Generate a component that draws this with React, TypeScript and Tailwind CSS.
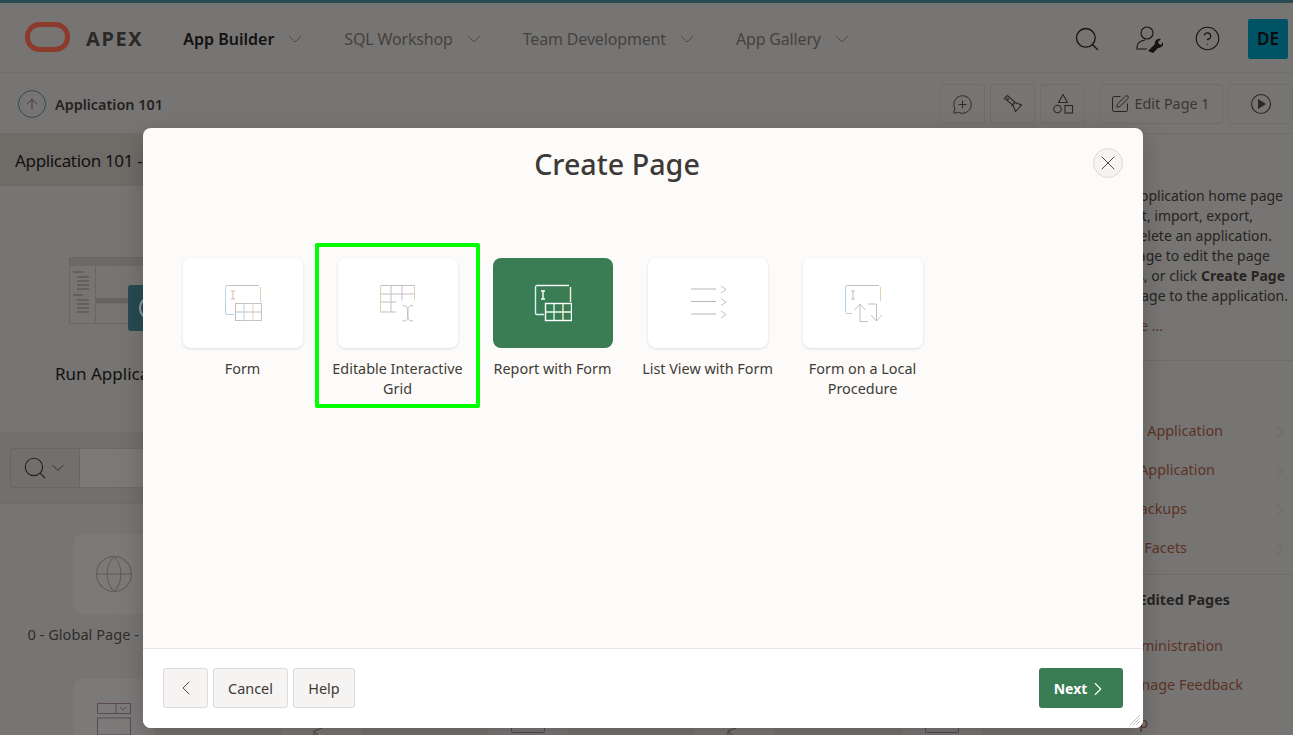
import { ChevronDown, ChevronLeft, ChevronRight, X, Search, CircleHelp, ArrowUp, MessageCirclePlus, SquarePen, Globe } from "lucide-react";

const font = "font-['Noto_Sans',sans-serif]";

function TileIconForm({ active }: { active?: boolean }) {
  const left = active ? "#d4f5f5" : "#b9d3e6";
  const right = active ? "#f5efd2" : "#e3cfb6";
  return (
    <svg width="38" height="38" viewBox="0 0 38 38" fill="none" stroke="currentColor" strokeWidth={active ? 1.4 : 1}>
      {/* form outline */}
      <path d="M3 1.500h32" />
      <path d="M36.500 3v15" stroke={right} />
      <path d="M3 1.500A1.500 1.500 0 0 0 1.500 3v26A1.500 1.500 0 0 0 3 30.500h7" stroke={left} />
      <path d="M7 7h4M9 7v8M7 15h4" />
      {/* table */}
      <rect x="11.500" y="19.500" width="26" height="17" />
      <path d="M11.500 28h26" />
      <path d="M20 19.500v17" stroke={left} />
      <path d="M29 19.500v17" stroke={right} />
    </svg>
  );
}

function TileIconGrid() {
  return (
    <svg width="38" height="38" viewBox="0 0 38 38" fill="none" stroke="currentColor" strokeWidth="1">
      <path d="M1.500 1.500h34M1.500 10h34M1.500 18h16M1.500 28h16" />
      <path d="M1.500 1.500v26.500" stroke="#e3cfb6" />
      <path d="M12 1.500v26.500" stroke="#c9b8d8" />
      <path d="M23 1.500v15" stroke="#c9b8d8" />
      <path d="M35.500 1.500v15" stroke="#e3cfb6" />
      <path d="M23.500 21.500c3 0 5 1 5 4v8c0 3-2 3.500-5 3.500M34 21.500c-3 0-5 1-5 4v8c0 3 2 3.500 5 3.500" />
    </svg>
  );
}

function TileIconList() {
  return (
    <svg width="38" height="38" viewBox="0 0 38 38" fill="none" stroke="#b8b6b4" strokeWidth="1">
      <path d="M2 5h25M2 17.500h25M2 30h25" />
      <path d="M32 2l5 3.500-5 3.500M32 14.500l5 3.500-5 3.500M32 27l5 3.500-5 3.500" stroke="#c3bfce" />
    </svg>
  );
}

function TileIconProcedure() {
  return (
    <svg width="38" height="38" viewBox="0 0 38 38" fill="none" stroke="currentColor" strokeWidth="1">
      <path d="M3 1.500h32" />
      <path d="M36.500 3v14" stroke="#e3cfb6" />
      <path d="M3 1.500A1.500 1.500 0 0 0 1.500 3v25A1.500 1.500 0 0 0 3 29.500h5" stroke="#b9d3e6" />
      <path d="M7 7h4M9 7v8M7 15h4" />
      <path d="M16 37.500V20M10.500 26l5.500-6 5.500 6" />
      <path d="M16 37.500h8M24 20h8.500v17M27 31l5.500 6 5.500-6" />
    </svg>
  );
}

function Tile({ label, icon, active }: { label: string; icon: React.ReactNode; active?: boolean }) {
  return (
    <div className="relative flex w-[155px] flex-col items-center">
      <div
        className={
          active
            ? "flex h-[90px] w-[120px] items-center justify-center rounded-lg bg-[#3a7d54] text-white"
            : "flex h-[90px] w-[120px] items-center justify-center rounded-lg bg-white text-[#c4c1be] shadow-[0_1px_3px_rgba(0,0,0,0.12)]"
        }
      >
        {icon}
      </div>
      <p className="mt-[11px] w-[146px] text-center text-[14.4px] leading-5 text-[#3f3b38]">{label}</p>
    </div>
  );
}

function HeaderLink({ label, bold }: { label: string; bold?: boolean }) {
  return (
    <div className={bold ? "flex items-center gap-[9px] font-semibold text-[#111]" : "flex items-center gap-[9px] tracking-[-0.01em] text-[#444240]"}>
      <span>{label}</span>
      <ChevronDown size={24} strokeWidth={0.7} className="text-[#3c3a38]" />
    </div>
  );
}

function ToolButton({ children, className }: { children: React.ReactNode; className?: string }) {
  return (
    <div className={"flex h-10 items-center justify-center rounded-[3px] border border-[#6f6d6a] " + className}>
      {children}
    </div>
  );
}

function SideLink({ label, className }: { label: string; className: string }) {
  return (
    <div className="flex h-[39px] items-center justify-end pr-[2px] text-[14.4px] text-[#5c3226]">
      <span className={className}>{label}</span>
      <ChevronRight size={22} strokeWidth={0.9} className="text-[#666462]" />
    </div>
  );
}

export default function App() {
  return (
    <div className={"relative flex h-screen w-full flex-col overflow-hidden bg-[#777573] " + font}>
      <div className="h-[3px] shrink-0 bg-[#284a52]" />

      {/* top header */}
      <header className="flex h-[70px] shrink-0 items-center border-b border-[#716f6d] pl-[25px] pr-[5px] pt-[2px] text-[16px]">
        <svg width="46" height="30" viewBox="0 0 46 30" fill="none" className="-mt-[3px]">
          <rect x="2.500" y="2.500" width="40" height="25" rx="12" stroke="#8c3a2c" strokeWidth="5" />
        </svg>
        <span className="ml-[15px] text-[20px] font-bold tracking-[1.6px] text-[#2b2927]">APEX</span>
        <nav className="ml-[40px] flex items-center gap-[37px]">
          <HeaderLink label="App Builder" bold />
          <HeaderLink label="SQL Workshop" />
          <HeaderLink label="Team Development" />
          <HeaderLink label="App Gallery" />
        </nav>
        <div className="ml-auto flex items-center text-[#151413]">
          <Search size={28} strokeWidth={1.100} />
          <svg width="28" height="28" viewBox="0 0 28 28" fill="none" stroke="currentColor" strokeWidth="1.100" className="ml-[34px]">
            <circle cx="12" cy="8" r="6" />
            <path d="M10 15c-5 1-8 3-8 7v2h10" />
            <path d="M13 26l7-7c-1-3 2-6 6-5l-3 3 1 2 2 1 2-3c1 4-2 6-5 6l-5 5z" fill="currentColor" stroke="none" />
          </svg>
          <CircleHelp size={27} strokeWidth={1} className="ml-[31px]" />
          <div className="ml-[27px] flex h-10 w-10 items-center justify-center rounded-[2px] bg-[#005365] text-[17px] font-semibold text-[#0c0c0c]">
            DE
          </div>
        </div>
      </header>

      {/* application toolbar */}
      <div className="flex h-[61px] shrink-0 items-center border-b border-[#6f6d6b] pl-[18px] pt-[2px]">
        <div className="flex h-7 w-7 items-center justify-center rounded-full border border-[#2a4d57] text-[#222]">
          <ArrowUp size={16} strokeWidth={1} />
        </div>
        <span className="ml-[9px] mt-px text-[14.4px] font-semibold text-[#24221f]">Application 101</span>
        <div className="ml-auto flex items-center">
          <ToolButton className="w-[45px] text-[#2a2826]">
            <MessageCirclePlus size={21} strokeWidth={1.100} />
          </ToolButton>
          <ToolButton className="ml-[5px] w-[45px] text-[#2a2826]">
            <svg width="20" height="20" viewBox="0 0 20 20" fill="none" stroke="currentColor" strokeWidth="1.100">
              <path d="M1.500 4.500l3-3 7.500 7 6.500 2.500-6 6.500-2.500-6.500zM12 8.500l-3.500 3.500" />
              <circle cx="5" cy="5" r="0.500" />
            </svg>
          </ToolButton>
          <ToolButton className="ml-[5px] w-[45px] text-[#2a2826]">
            <svg width="22" height="22" viewBox="0 0 22 22" fill="none" stroke="currentColor" strokeWidth="1.100">
              <path d="M11 1.500l4.500 8h-9z" />
              <circle cx="5.500" cy="16" r="3.700" />
              <rect x="13" y="12.500" width="7.500" height="7.500" />
            </svg>
          </ToolButton>
          <ToolButton className="ml-[15px] w-[123px] gap-[4px] pr-[3px] text-[14.4px] text-[#3d3532]">
            <SquarePen size={20} strokeWidth={1.200} className="text-[#262422]" />
            Edit Page 1
          </ToolButton>
          <ToolButton className="ml-[5px] w-[65px] text-[#2a2826]">
            <svg width="22" height="22" viewBox="0 0 22 22" fill="none" stroke="currentColor" strokeWidth="1.100">
              <circle cx="11" cy="11" r="9.500" />
              <path d="M8 6l8 5-8 5z" fill="currentColor" stroke="none" />
            </svg>
          </ToolButton>
        </div>
      </div>

      <div className="flex min-h-0 flex-1">
        {/* page finder */}
        <main className="min-w-0 flex-1">
          <div className="flex h-[52px] items-center border-b border-[#6c6a67] bg-[#6f6c68] pl-[15px] pt-[2px] text-[17px] tracking-[-0.02em] text-[#111]">
            Application 101 - Sample
          </div>
          <div className="flex h-[247px] flex-col items-start border-b border-[#6f6d6a] pl-[55px]">
            <svg width="90" height="67" viewBox="0 0 90 67" fill="none" className="ml-[14px] mt-[71px]">
              <rect x="0.500" y="0.500" width="89" height="66" stroke="#696765" />
              <rect x="1" y="1" width="88" height="8" fill="#6c6a68" />
              <path d="M26.500 9v57M26.500 46h62" stroke="#696765" />
              <path d="M4 15h10M8 20h12M8 24h12M8 28h12M8 32h12M4 38h10M8 43h12M8 47h12M8 51h12M8 55h12" stroke="#5c5a58" strokeWidth="1.500" />
              <rect x="27" y="41" width="62" height="5" fill="#656361" />
            </svg>
            <div className="absolute left-[128px] top-[285px] flex h-[46px] w-[30px] items-center rounded-[3px] bg-[#284a52] pl-[11px]">
              <div className="h-6 w-6 shrink-0 rounded-full border-2 border-[#8a9a9e]" />
            </div>
            <p className="mt-[37px] whitespace-nowrap text-[17px] text-[#111]">Run Application</p>
          </div>
          <div className="flex h-[71px] items-center border-b border-[#6e6c69] bg-[#72706d] pl-[10px]">
            <div className="flex h-10 w-[70px] items-center justify-center rounded-l-[3px] border border-[#686663] text-[#222]">
              <Search size={26} strokeWidth={1} />
              <ChevronDown size={20} strokeWidth={1} />
            </div>
            <div className="h-10 w-[300px] border-y border-[#6c6a67] bg-[#7b7977]" />
          </div>
          <div className="grid grid-cols-[repeat(5,207px)] justify-start gap-y-[35px] pl-[10px] pt-[30px] text-center text-[14.6px] text-[#2f2d2b]">
            <div className="flex flex-col items-center">
              <div className="flex h-20 w-20 items-center justify-center rounded-lg bg-[#7c7a78] text-[#5e5c5a]">
                <Globe size={42} strokeWidth={0.6} />
              </div>
              <p className="mt-[10px] whitespace-nowrap leading-5">0 - Global Page - Desktop</p>
            </div>
            <div className="col-span-4" />
            <div className="mx-auto flex h-20 w-20 justify-center rounded-lg bg-[#7c7a78] pt-[23px]">
              <svg width="36" height="34" viewBox="0 0 36 34" fill="none" stroke="#5a4a55">
                <rect x="1.500" y="1.500" width="33" height="10" />
                <path d="M20 1.500v10M24 5l3 3 3-3" />
                <rect x="1.500" y="16" width="33" height="17" />
              </svg>
            </div>
            <div className="mx-auto flex h-20 w-20 justify-center rounded-lg bg-[#7c7a78] pt-[44px]">
              <svg width="24" height="20" viewBox="0 0 24 20" fill="none" stroke="#4a4340">
                <path d="M5 19V8l8-3M5 8l5 5" />
              </svg>
            </div>
            <div className="mx-auto flex h-20 w-20 justify-center rounded-lg bg-[#7c7a78] pt-[23px]">
              <svg width="36" height="32" viewBox="0 0 36 32" fill="none" stroke="#5a4a55">
                <rect x="1.500" y="1.500" width="33" height="29" rx="1" />
              </svg>
            </div>
            <div className="mx-auto flex h-20 w-20 justify-center rounded-lg bg-[#7c7a78] pt-[44px]">
              <svg width="24" height="20" viewBox="0 0 24 20" fill="none" stroke="#4a4340">
                <path d="M5 19V8l8-3M5 8l5 5" />
              </svg>
            </div>
            <div className="mx-auto flex h-20 w-20 justify-center rounded-lg bg-[#7c7a78] pt-[23px]">
              <svg width="36" height="32" viewBox="0 0 36 32" fill="none" stroke="#5a4a55">
                <rect x="1.500" y="1.500" width="33" height="29" rx="1" />
              </svg>
            </div>
          </div>
        </main>

        {/* right column, mostly behind the dialog */}
        <aside className="w-[293px] shrink-0 whitespace-nowrap text-sm text-[#262422]">
          <div className="h-[227px] border-b border-[#6e6c6a] pt-[52px] text-right leading-5">
            <p className="pr-[10px]">This is the application home page</p>
            <p className="pr-[40px]">Click Run to run it, import, export,</p>
            <p className="pr-[21px]">copy or delete an application.</p>
            <p className="pr-[23px]">Click a page to edit the page</p>
            <p className="pr-[8px]">properties, or click <b className="font-bold">Create Page</b></p>
            <p className="pr-[5px]">to add a page to the application.</p>
            <p className="mt-[10px] pr-[130px] text-[#5c3226]">Learn more ...</p>
          </div>
          <div className="h-[214px] border-b border-[#6e6c6a] pt-[51px]">
            <SideLink label="Delete this Application" className="mr-[46px]" />
            <SideLink label="Copy this Application" className="mr-[54px]" />
            <SideLink label="Application Backups" className="mr-[82px]" />
            <SideLink label="Manage Facets" className="mr-[82px]" />
          </div>
          <div className="pt-[15px] text-right">
            <p className="pr-[63px] text-[14.4px] font-bold">Recently Edited Pages</p>
            <div className="mt-[15px] text-[14.4px] leading-[39px] text-[#5c3226]">
              <p className="pr-[70px]">1 - Administration</p>
              <p className="pr-[50px]">2 - Manage Feedback</p>
              <p className="-mt-px pr-[145px]">Help</p>
            </div>
          </div>
        </aside>
      </div>

      {/* dialog */}
      <div className="absolute left-[143px] top-[128px] flex h-[600px] w-[1000px] flex-col rounded-lg bg-[#fcfbf9] shadow-[0_8px_24px_rgba(0,0,0,0.2)]">
        <div className="relative flex h-[72px] shrink-0 items-center justify-center pr-[52px]">
          <h1 className="text-[28.7px] font-medium text-[#3d3936]">Create Page</h1>
          <button className="absolute right-[20px] top-[20px] flex h-[30px] w-[30px] items-center justify-center rounded-full border border-[#dedcda] bg-[#f5f4f2] text-[#3c3836]">
            <X size={24} strokeWidth={0.9} />
          </button>
        </div>
        <div className="flex flex-1 items-start pl-[22px] pt-[58px]">
          <Tile label="Form" icon={<TileIconForm />} />
          <div className="relative">
            <Tile label="Editable Interactive Grid" icon={<TileIconGrid />} />
            <div className="absolute -top-[15px] left-[-5px] h-[165px] w-[165px] rounded-[2px] border-[4px] border-[#00ff00]" />
          </div>
          <Tile label="Report with Form" icon={<TileIconForm active />} active />
          <Tile label="List View with Form" icon={<TileIconList />} />
          <Tile label="Form on a Local Procedure" icon={<TileIconProcedure />} />
        </div>
        <div className="flex h-[80px] shrink-0 items-center justify-between rounded-b-lg border-t border-[#e8e6e4] bg-white px-[20px] pb-px">
          <div className="flex gap-[5px] text-[14.4px] text-[#3d3936]">
            <button className="flex h-10 w-[45px] items-center justify-center rounded-[3px] border border-[#dedcda] bg-[#f5f4f2]">
              <ChevronLeft size={24} strokeWidth={0.9} />
            </button>
            <button className="h-10 w-[75px] rounded-[3px] border border-[#dedcda] bg-[#f5f4f2] pt-px">Cancel</button>
            <button className="h-10 w-[62px] rounded-[3px] border border-[#dedcda] bg-[#f5f4f2] pt-px">Help</button>
          </div>
          <button className="flex h-10 w-[84px] items-center justify-center rounded-[3px] bg-[#3a7d54] pl-px pt-px text-sm font-bold text-white">
            Next
            <ChevronRight size={22} strokeWidth={1.200} />
          </button>
        </div>
        <svg width="12" height="12" viewBox="0 0 12 12" stroke="#c5c3c1" className="absolute bottom-[2px] right-[2px]">
          <path d="M11 1L1 11M11 4L4 11M11 7L7 11" />
        </svg>
      </div>
    </div>
  );
}
